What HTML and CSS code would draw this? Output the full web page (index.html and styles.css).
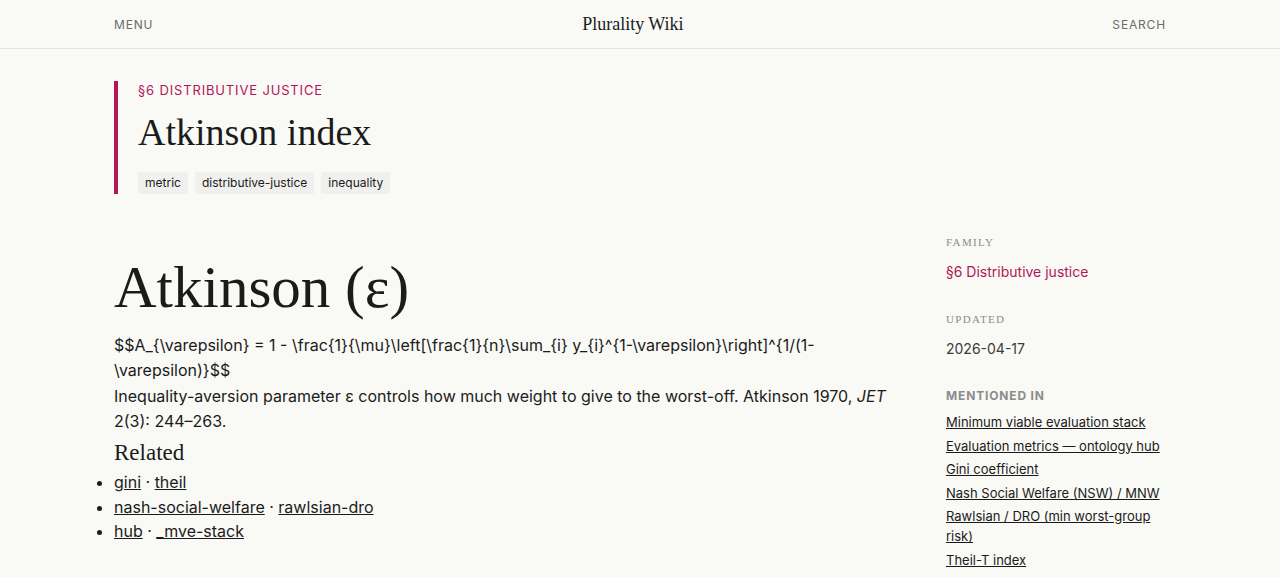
FILE: index.html
```html
<!DOCTYPE html>
<html lang="en">
<head>
<meta charset="utf-8">
<title>Atkinson index — Plurality Wiki</title>
<link rel="stylesheet" href="styles.css">
</head>
<body>
<header class="topbar">
  <div class="topbar-inner">
    <a class="nav-link" href="#">MENU</a>
    <a class="brand" href="#">Plurality Wiki</a>
    <a class="nav-link" href="#">SEARCH</a>
  </div>
</header>

<main class="page">
  <section class="hero">
    <div class="eyebrow">§6 DISTRIBUTIVE JUSTICE</div>
    <h1 class="hero-title">Atkinson index</h1>
    <div class="tags">
      <span class="tag">metric</span>
      <span class="tag">distributive-justice</span>
      <span class="tag">inequality</span>
    </div>
  </section>

  <div class="layout">
    <article class="article">
      <h1 class="article-title">Atkinson (ε)</h1>
      <p class="body-text">$$A_{\varepsilon} = 1 - \frac{1}{\mu}\left[\frac{1}{n}\sum_{i} y_{i}^{1-\varepsilon}\right]^{1/(1-\varepsilon)}$$<br>Inequality-aversion parameter ε controls how much weight to give to the worst-off. Atkinson 1970, <em>JET</em> 2(3): 244–263.</p>
      <h2 class="section-title">Related</h2>
      <ul class="related">
        <li><a href="#">gini</a> · <a href="#">theil</a></li>
        <li><a href="#">nash-social-welfare</a> · <a href="#">rawlsian-dro</a></li>
        <li><a href="#">hub</a> · <a href="#">_mve-stack</a></li>
      </ul>
    </article>

    <aside class="sidebar">
      <div class="meta">
        <div class="meta-label">Family</div>
        <a class="meta-family" href="#">§6 Distributive justice</a>
      </div>
      <div class="meta">
        <div class="meta-label">Updated</div>
        <div class="meta-value">2026-04-17</div>
      </div>
      <div class="mentions">
        <div class="mentions-label">MENTIONED IN</div>
        <ul class="mentions-list">
          <li><a href="#">Minimum viable evaluation stack</a></li>
          <li><a href="#">Evaluation metrics — ontology hub</a></li>
          <li><a href="#">Gini coefficient</a></li>
          <li><a href="#">Nash Social Welfare (NSW) / MNW</a></li>
          <li><a href="#">Rawlsian / DRO (min worst-group risk)</a></li>
          <li><a href="#">Theil-T index</a></li>
        </ul>
      </div>
    </aside>
  </div>
</main>
</body>
</html>
```

FILE: styles.css
```css
* {
  box-sizing: border-box;
}

html, body {
  margin: 0;
  padding: 0;
}

body {
  background: #f9f9f6;
  color: #1b1b1b;
  font-family: Inter, "Noto Sans", sans-serif;
}

a {
  color: inherit;
}

/* top navigation */
.topbar {
  border-bottom: 1px solid #e3e3df;
}

.topbar-inner {
  width: 1052px;
  margin: 0 auto;
  height: 48px;
  display: flex;
  align-items: center;
  justify-content: space-between;
}

.nav-link {
  font-size: 12px;
  letter-spacing: 0.07em;
  color: #6b6b6b;
  text-decoration: none;
}

.brand {
  font-family: "Liberation Serif", serif;
  font-size: 18px;
  color: #1b1b1b;
  text-decoration: none;
}

/* page body */
.page {
  width: 1052px;
  margin: 0 auto;
  padding-top: 32px;
}

.hero {
  border-left: 4px solid #b3165a;
  padding-left: 20px;
  padding-top: 1px;
}

.eyebrow {
  font-size: 13px;
  letter-spacing: 0.065em;
  color: #b3165a;
  line-height: 16px;
}

.hero-title {
  font-family: "Liberation Serif", serif;
  font-weight: 400;
  font-size: 38px;
  line-height: 48px;
  margin: 10px 0 16px;
  color: #1b1b1b;
}

.tags {
  display: flex;
  gap: 7px;
}

.tag {
  background: #f0f0ee;
  font-size: 12px;
  line-height: 22px;
  padding: 0 7px;
  border-radius: 2px;
}

.layout {
  display: grid;
  grid-template-columns: 1fr 220px;
  gap: 56px;
  margin-top: 40px;
}

.article-title {
  font-family: "Liberation Serif", serif;
  font-weight: 400;
  font-size: 59px;
  line-height: 72px;
  margin: 17px 0 10px;
  color: #1b1b1b;
}

.body-text {
  font-size: 16px;
  line-height: 25.3px;
  margin: 0;
}

.section-title {
  font-family: "Liberation Serif", serif;
  font-weight: 400;
  font-size: 23px;
  line-height: 30px;
  margin: 4px 0 2px;
}

.related {
  margin: 0;
  padding: 0;
  font-size: 16px;
  line-height: 24.5px;
}

/* sidebar */
.meta {
  margin-bottom: 29px;
}

.meta-label {
  font-family: "Liberation Serif", serif;
  font-size: 11px;
  letter-spacing: 0.12em;
  text-transform: uppercase;
  color: #8c8c8c;
  line-height: 16px;
  margin-bottom: 12px;
}

.meta-family {
  font-size: 14px;
  color: #b3165a;
  text-decoration: none;
  line-height: 20px;
  display: block;
}

.meta-value {
  font-size: 14px;
  color: #3b3b3b;
  line-height: 20px;
}

.mentions-label {
  font-size: 12px;
  font-weight: 700;
  letter-spacing: 0.07em;
  color: #8c8c8c;
  line-height: 16px;
  margin-bottom: 8px;
}

.mentions-list {
  list-style: none;
  margin: 0;
  padding: 0;
  font-size: 13px;
  line-height: 20px;
}

.mentions-list li {
  margin-bottom: 3.6px;
}

.mentions-list a {
  color: #1b1b1b;
}
```
